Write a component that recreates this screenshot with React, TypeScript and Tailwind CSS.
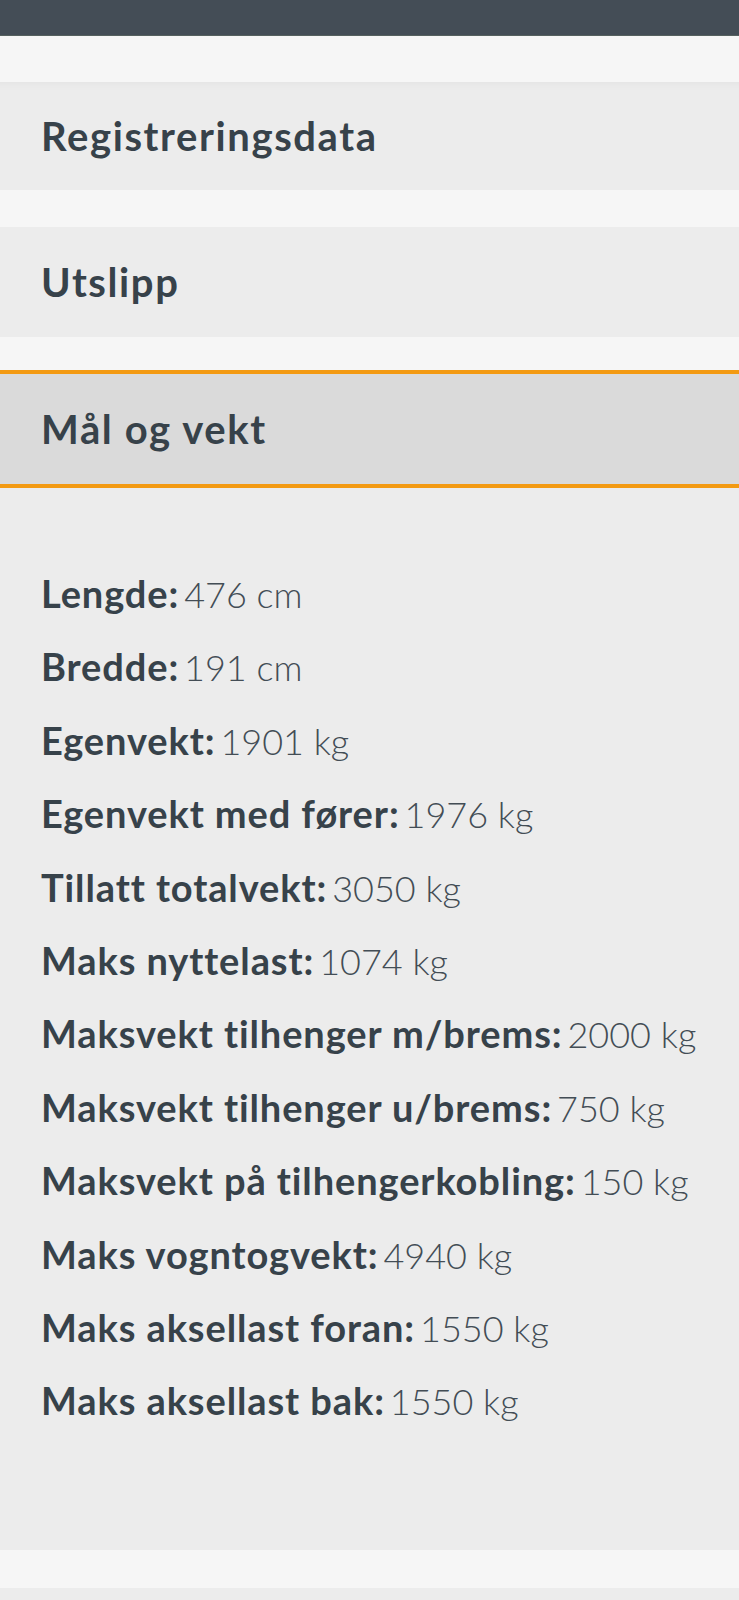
export default function App() {
  const rows: [string, string][] = [
    ["Lengde:", "476 cm"],
    ["Bredde:", "191 cm"],
    ["Egenvekt:", "1901 kg"],
    ["Egenvekt med fører:", "1976 kg"],
    ["Tillatt totalvekt:", "3050 kg"],
    ["Maks nyttelast:", "1074 kg"],
    ["Maksvekt tilhenger m/brems:", "2000 kg"],
    ["Maksvekt tilhenger u/brems:", "750 kg"],
    ["Maksvekt på tilhengerkobling:", "150 kg"],
    ["Maks vogntogvekt:", "4940 kg"],
    ["Maks aksellast foran:", "1550 kg"],
    ["Maks aksellast bak:", "1550 kg"],
  ];

  return (
    <div
      className="min-h-[1600px] w-full bg-[#f6f6f6] text-[#37424a]"
      style={{ fontFamily: "Lato, 'Open Sans', sans-serif" }}
    >
      <div className="h-[36px] bg-[#444d56] border-b border-[#56615f]" />

      <div className="pt-[46px]">
        <div className="h-[108px] bg-[#ececec] flex items-center px-[41px] shadow-[inset_0_10px_8px_-8px_rgba(0,0,0,0.04)]">
          <h2 className="text-[40px] font-bold tracking-[1.6px]">Registreringsdata</h2>
        </div>

        <div className="mt-[37px] h-[110px] bg-[#ececec] flex items-center px-[41px]">
          <h2 className="text-[40px] font-bold tracking-[1.6px]">Utslipp</h2>
        </div>

        <div className="mt-[33px] border-y-[4px] border-[#f39a12] bg-[#dadada] h-[118px] flex items-center px-[41px]">
          <h2 className="text-[40px] font-bold tracking-[1.6px]">Mål og vekt</h2>
        </div>

        <div className="bg-[#ececec] pt-[69px] pb-[112px] px-[41px]">
          {rows.map(([label, value]) => (
            <div key={label} className="h-[73.4px] text-[38px] leading-[73.4px] whitespace-nowrap overflow-hidden">
              <span className="font-bold tracking-[0.9px]">{label}</span>
              <span className="text-[36px] leading-none font-light text-[#434d55] ml-[5px]">{value}</span>
            </div>
          ))}
        </div>

        <div className="mt-[38px] h-[12px] bg-[#ececec]" />
      </div>
    </div>
  );
}
